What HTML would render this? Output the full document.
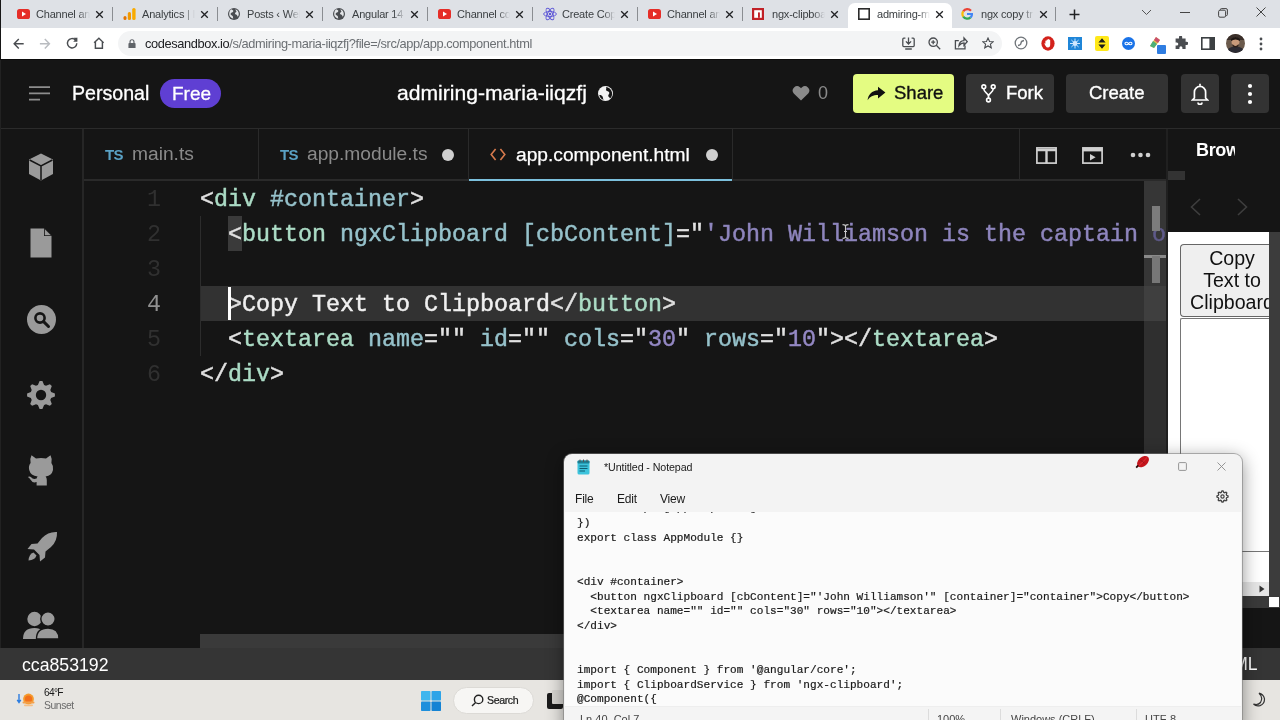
<!DOCTYPE html>
<html><head><meta charset="utf-8">
<style>
*{box-sizing:border-box;margin:0;padding:0}
html,body{width:1280px;height:720px;overflow:hidden;background:#151515;font-family:"Liberation Sans",sans-serif;}
.a{position:absolute}
#root{position:relative;width:1280px;height:720px;overflow:hidden;filter:blur(0.4px);will-change:transform}
/* chrome */
#tabs{left:0;top:0;width:1280px;height:28px;background:#dee1e6}
.tt{top:7px;font-size:11px;letter-spacing:-0.2px;color:#3c4043;white-space:nowrap;overflow:hidden;height:15px;line-height:15px}
.tx{top:6px;font-size:13px;color:#202124;line-height:15px;width:10px;text-align:center}
.sep{top:7px;width:1px;height:14px;background:#8a8d91}
#addr{left:0;top:28px;width:1280px;height:31px;background:#fff}
#pill{left:118px;top:31px;width:884px;height:25px;border-radius:13px;background:#f3f4f5}
/* csb */
#hdr{left:0;top:59px;width:1280px;height:70px;background:#151515;border-bottom:1px solid #2b2b2b}
.btn{top:74px;height:39px;border-radius:4px;background:#333;color:#fff;font-size:18.5px;line-height:39px;white-space:nowrap}
#side{left:0;top:129px;width:84px;height:519px;background:#151515;border-right:2px solid #262626}
#tabbar{left:84px;top:129px;width:1083px;height:52px;background:#151515;border-bottom:2px solid #2a2a2a}
.ft{top:129px;height:51px;border-right:1px solid #2a2a2a;font-size:18px;line-height:51px;white-space:nowrap}
.code{font-family:"Liberation Mono",monospace;font-size:23.33px;line-height:35px;white-space:pre;height:35px;margin-top:2px;-webkit-text-stroke:0.45px}
.ln{left:120px;width:41px;text-align:right;color:#303030;-webkit-text-stroke:0 !important}
.tg{color:#acdcc6}.at{color:#96c2cb}.pn{color:#e2e2e2}.st{color:#8e85bd}.wh{color:#f0f0f0}.nm{color:#9488c4}
.np{font-family:"Liberation Mono",monospace;font-size:11.1px;line-height:14.7px;white-space:pre;color:#1a1a1a;left:577px;margin-top:1.5px;-webkit-text-stroke:0.2px #1a1a1a}
</style></head><body><div id="root">
<!-- CHROME TABS -->
<div class="a" id="tabs"></div>
<div class="a" style="left:848px;top:3px;width:104px;height:26px;background:#fff;border-radius:7px 7px 0 0"></div>
<svg class="a" style="left:17px;top:9px" width="13" height="10" viewBox="0 0 13 10"><rect width="13" height="10" rx="2.6" fill="#e52d27"/><path d="M5 2.6 L9 5 L5 7.4Z" fill="#fff"/></svg>
<div class="a tt" style="left:36px;width:54px;-webkit-mask-image:linear-gradient(90deg,#000 78%,transparent 100%)">Channel an</div>
<svg class="a" style="left:95px;top:10px" width="9" height="9" viewBox="0 0 9 9"><path d="M1.2 1.2 L7.8 7.8 M7.8 1.2 L1.2 7.8" stroke="#202124" stroke-width="1.3"/></svg>
<div class="a sep" style="left:112px"></div>
<svg class="a" style="left:123px;top:8px" width="13" height="12" viewBox="0 0 13 12"><rect x="0.5" y="8" width="3" height="4" rx="1.5" fill="#e37400"/><rect x="4.8" y="4" width="3.2" height="8" rx="1.5" fill="#f29900"/><rect x="9.2" y="0" width="3.4" height="12" rx="1.6" fill="#f9ab00"/></svg>
<div class="a tt" style="left:142px;width:53px;-webkit-mask-image:linear-gradient(90deg,#000 78%,transparent 100%)">Analytics | I</div>
<svg class="a" style="left:200px;top:10px" width="9" height="9" viewBox="0 0 9 9"><path d="M1.2 1.2 L7.8 7.8 M7.8 1.2 L1.2 7.8" stroke="#202124" stroke-width="1.3"/></svg>
<div class="a sep" style="left:217px"></div>
<svg class="a" style="left:228px;top:8px" width="12" height="12" viewBox="0 0 12 12"><circle cx="6" cy="6" r="6" fill="#4a4d51"/><path d="M3.2 1.2 C4.5 2 5.8 2.2 5.2 3.6 C4.6 4.8 3 4.4 2.6 5.8 C2.3 7 3.8 7.4 4.6 8 C5.2 8.6 4.8 10 5.4 10.6 L4 10.2 C2 9 1 7.5 1.2 5.5 C1.3 3.5 2 2.2 3.2 1.2Z M7.5 1.2 C9.5 2 10.8 3.8 10.8 6 C10.8 7 10.4 8 9.8 8.8 C9.2 8.2 9.4 7.2 8.6 6.8 C7.8 6.4 6.8 6.2 7 5.2 C7.2 4.4 8.4 4.4 8.4 3.6 C8.4 2.8 7.4 2.4 7.5 1.2Z" fill="#e3e5e8"/></svg>
<div class="a tt" style="left:247px;width:53px;-webkit-mask-image:linear-gradient(90deg,#000 78%,transparent 100%)">Posts ‹ Wel</div>
<svg class="a" style="left:305px;top:10px" width="9" height="9" viewBox="0 0 9 9"><path d="M1.2 1.2 L7.8 7.8 M7.8 1.2 L1.2 7.8" stroke="#202124" stroke-width="1.3"/></svg>
<div class="a sep" style="left:322px"></div>
<svg class="a" style="left:333px;top:8px" width="12" height="12" viewBox="0 0 12 12"><circle cx="6" cy="6" r="6" fill="#4a4d51"/><path d="M3.2 1.2 C4.5 2 5.8 2.2 5.2 3.6 C4.6 4.8 3 4.4 2.6 5.8 C2.3 7 3.8 7.4 4.6 8 C5.2 8.6 4.8 10 5.4 10.6 L4 10.2 C2 9 1 7.5 1.2 5.5 C1.3 3.5 2 2.2 3.2 1.2Z M7.5 1.2 C9.5 2 10.8 3.8 10.8 6 C10.8 7 10.4 8 9.8 8.8 C9.2 8.2 9.4 7.2 8.6 6.8 C7.8 6.4 6.8 6.2 7 5.2 C7.2 4.4 8.4 4.4 8.4 3.6 C8.4 2.8 7.4 2.4 7.5 1.2Z" fill="#e3e5e8"/></svg>
<div class="a tt" style="left:352px;width:53px;-webkit-mask-image:linear-gradient(90deg,#000 78%,transparent 100%)">Angular 14</div>
<svg class="a" style="left:410px;top:10px" width="9" height="9" viewBox="0 0 9 9"><path d="M1.2 1.2 L7.8 7.8 M7.8 1.2 L1.2 7.8" stroke="#202124" stroke-width="1.3"/></svg>
<div class="a sep" style="left:427px"></div>
<svg class="a" style="left:438px;top:9px" width="13" height="10" viewBox="0 0 13 10"><rect width="13" height="10" rx="2.6" fill="#e52d27"/><path d="M5 2.6 L9 5 L5 7.4Z" fill="#fff"/></svg>
<div class="a tt" style="left:457px;width:53px;-webkit-mask-image:linear-gradient(90deg,#000 78%,transparent 100%)">Channel co</div>
<svg class="a" style="left:515px;top:10px" width="9" height="9" viewBox="0 0 9 9"><path d="M1.2 1.2 L7.8 7.8 M7.8 1.2 L1.2 7.8" stroke="#202124" stroke-width="1.3"/></svg>
<div class="a sep" style="left:532px"></div>
<svg class="a" style="left:543px;top:7px" width="14" height="14" viewBox="0 0 14 14" fill="none" stroke="#5b55d6" stroke-width="0.9"><ellipse cx="7" cy="7" rx="6.4" ry="2.5"/><ellipse cx="7" cy="7" rx="6.4" ry="2.5" transform="rotate(60 7 7)"/><ellipse cx="7" cy="7" rx="6.4" ry="2.5" transform="rotate(120 7 7)"/><circle cx="7" cy="7" r="1.2" fill="#5b55d6" stroke="none"/></svg>
<div class="a tt" style="left:562px;width:53px;-webkit-mask-image:linear-gradient(90deg,#000 78%,transparent 100%)">Create Cop</div>
<svg class="a" style="left:620px;top:10px" width="9" height="9" viewBox="0 0 9 9"><path d="M1.2 1.2 L7.8 7.8 M7.8 1.2 L1.2 7.8" stroke="#202124" stroke-width="1.3"/></svg>
<div class="a sep" style="left:637px"></div>
<svg class="a" style="left:648px;top:9px" width="13" height="10" viewBox="0 0 13 10"><rect width="13" height="10" rx="2.6" fill="#e52d27"/><path d="M5 2.6 L9 5 L5 7.4Z" fill="#fff"/></svg>
<div class="a tt" style="left:667px;width:53px;-webkit-mask-image:linear-gradient(90deg,#000 78%,transparent 100%)">Channel an</div>
<svg class="a" style="left:725px;top:10px" width="9" height="9" viewBox="0 0 9 9"><path d="M1.2 1.2 L7.8 7.8 M7.8 1.2 L1.2 7.8" stroke="#202124" stroke-width="1.3"/></svg>
<div class="a sep" style="left:742px"></div>
<svg class="a" style="left:752px;top:8px" width="12" height="12" viewBox="0 0 12 12"><rect width="12" height="12" fill="#c12127"/><rect x="2.2" y="2.2" width="7.6" height="7.6" fill="#fff"/><rect x="6" y="4.4" width="1.9" height="5.4" fill="#c12127"/></svg>
<div class="a tt" style="left:772px;width:53px;-webkit-mask-image:linear-gradient(90deg,#000 78%,transparent 100%)">ngx-clipboa</div>
<svg class="a" style="left:830px;top:10px" width="9" height="9" viewBox="0 0 9 9"><path d="M1.2 1.2 L7.8 7.8 M7.8 1.2 L1.2 7.8" stroke="#202124" stroke-width="1.3"/></svg>
<svg class="a" style="left:858px;top:8px" width="12" height="12" viewBox="0 0 12 12"><rect x="0.8" y="0.8" width="10.4" height="10.4" fill="#fff" stroke="#2b2b2b" stroke-width="1.6"/></svg>
<div class="a tt" style="left:877px;width:53px;-webkit-mask-image:linear-gradient(90deg,#000 78%,transparent 100%)">admiring-m</div>
<svg class="a" style="left:935px;top:10px" width="9" height="9" viewBox="0 0 9 9"><path d="M1.2 1.2 L7.8 7.8 M7.8 1.2 L1.2 7.8" stroke="#202124" stroke-width="1.3"/></svg>
<svg class="a" style="left:961px;top:8px" width="12" height="12" viewBox="0 0 12 12" fill="none" stroke-width="2.2"><path d="M10 2.8 A5 5 0 0 0 2.2 3.4" stroke="#ea4335"/><path d="M2.2 3.4 A5 5 0 0 0 2.2 8.6" stroke="#fbbc05"/><path d="M2.2 8.6 A5 5 0 0 0 9.6 9.4" stroke="#34a853"/><path d="M9.6 9.4 A5 5 0 0 0 11 6 L6 6" stroke="#4285f4"/></svg>
<div class="a tt" style="left:981px;width:53px;-webkit-mask-image:linear-gradient(90deg,#000 78%,transparent 100%)">ngx copy tr</div>
<svg class="a" style="left:1039px;top:10px" width="9" height="9" viewBox="0 0 9 9"><path d="M1.2 1.2 L7.8 7.8 M7.8 1.2 L1.2 7.8" stroke="#202124" stroke-width="1.3"/></svg>
<div class="a sep" style="left:1055px"></div>
<svg class="a" style="left:1069px;top:9px" width="11" height="11" viewBox="0 0 11 11"><path d="M5.5 0.5V10.5M0.5 5.5H10.5" stroke="#202124" stroke-width="1.5"/></svg>
<svg class="a" style="left:1141px;top:9px" width="11" height="7" viewBox="0 0 11 7"><path d="M1 1 L5.5 5.5 L10 1" fill="none" stroke="#555" stroke-width="1"/></svg>
<div class="a" style="left:1180px;top:11.5px;width:10px;height:1.1px;background:#444"></div>
<svg class="a" style="left:1218px;top:8px" width="10" height="10" viewBox="0 0 10 10" fill="none" stroke="#444" stroke-width="1"><rect x="0.6" y="2.2" width="7" height="7" rx="1.4"/><path d="M2.4 2V1.6Q2.4 0.6 3.4 0.6H8Q9.4 0.6 9.4 2V6.6Q9.4 7.6 8.4 7.6H7.8"/></svg>
<svg class="a" style="left:1256px;top:7px" width="10" height="10" viewBox="0 0 10 10"><path d="M0.5 0.5 L9.5 9.5 M9.5 0.5 L0.5 9.5" stroke="#444" stroke-width="1"/></svg>
<div class="a" id="addr"></div>
<div class="a" id="pill"></div>
<svg class="a" style="left:12.8px;top:37.6px" width="11.6" height="11.6" viewBox="0 0 13 13" fill="none" stroke="#4a4d51" stroke-width="1.6"><path d="M12 6.5H1.5M6.5 1.2 L1.3 6.5 L6.5 11.8"/></svg>
<svg class="a" style="left:39.4px;top:37.6px" width="11.6" height="11.6" viewBox="0 0 13 13" fill="none" stroke="#b9bcc0" stroke-width="1.6"><path d="M1 6.5H11.5M6.5 1.2 L11.7 6.5 L6.5 11.8"/></svg>
<svg class="a" style="left:65.8px;top:37px" width="12.6" height="12.6" viewBox="0 0 14 14" fill="none" stroke="#4a4d51" stroke-width="1.6"><path d="M12 7 A5.2 5.2 0 1 1 10.4 3.2"/><path d="M8.2 0.8 H12.4 V5" stroke-width="0" fill="#4a4d51"/><path d="M12.6 0.6 V5.2 H8 Z" fill="#4a4d51" stroke="none"/></svg>
<svg class="a" style="left:92.6px;top:37px" width="11.8" height="12.6" viewBox="0 0 13 14" fill="none" stroke="#4a4d51" stroke-width="1.6"><path d="M1.2 6.5 L6.5 1.5 L11.8 6.5 M2.6 5.6 V12.6 H10.4 V5.6"/></svg>
<svg class="a" style="left:127.6px;top:38.6px" width="8" height="9.8" viewBox="0 0 9 11"><rect x="0.5" y="4.4" width="8" height="6.4" rx="1" fill="#5f6368"/><path d="M2.3 4.6V3 A2.2 2.2 0 0 1 6.7 3V4.6" fill="none" stroke="#5f6368" stroke-width="1.3"/></svg>
<div class="a" id="url" style="left:145px;top:36px;font-size:12.8px;line-height:16px;color:#6b6f73;white-space:nowrap;letter-spacing:-0.385px"><span style="color:#202124">codesandbox.io</span>/s/admiring-maria-iiqzfj?file=/src/app/app.component.html</div>
<svg class="a" style="left:902px;top:37px" width="13" height="13" viewBox="0 0 13 13" fill="none" stroke="#4a4d51" stroke-width="1.3"><path d="M3.4 1.2H1.8Q0.8 1.2 0.8 2.2V8.6Q0.8 9.6 1.8 9.6H11.2Q12.2 9.6 12.2 8.6V2.2Q12.2 1.2 11.2 1.2H9.6M6.5 0.6V6.8M3.9 4.4L6.5 7L9.1 4.4M3.2 12H9.8"/></svg>
<svg class="a" style="left:928px;top:37px" width="13" height="13" viewBox="0 0 13 13" fill="none" stroke="#4a4d51" stroke-width="1.3"><circle cx="5.2" cy="5.2" r="4.2"/><path d="M8.3 8.3L12.2 12.2M3.2 5.2H7.2M5.2 3.2V7.2"/></svg>
<svg class="a" style="left:954px;top:36px" width="14" height="14" viewBox="0 0 14 14" fill="none" stroke="#4a4d51" stroke-width="1.3"><path d="M4.8 4.6H1.4V12.8H11V9.4M5 9.6Q5.4 4.8 10 4.6V2L13.2 5.6L10 9.2V6.8Q7 6.8 5 9.6Z"/></svg>
<svg class="a" style="left:982px;top:37px" width="12" height="12" viewBox="0 0 14 14" fill="none" stroke="#4a4d51" stroke-width="1.3"><path d="M7 1.2L8.8 5.2L13 5.6L9.8 8.4L10.8 12.6L7 10.4L3.2 12.6L4.2 8.4L1 5.6L5.2 5.2Z"/></svg>
<svg class="a" style="left:1014px;top:36px" width="14" height="14" viewBox="0 0 14 14" fill="none" stroke="#70757a" stroke-width="1.3"><circle cx="7" cy="7" r="5.8"/><path d="M4 9.5Q7 9 7 7T10 4.5"/></svg>
<svg class="a" style="left:1041px;top:36px" width="14" height="15" viewBox="0 0 14 15"><ellipse cx="7" cy="7.5" rx="6.6" ry="7.2" fill="#d3221b"/><path d="M4.4 8V5.2Q4.4 4.6 5 4.6T5.6 5.2V4Q5.6 3.4 6.2 3.4T6.8 4V3.6Q6.8 3 7.4 3T8 3.6V4.2Q8 3.6 8.6 3.6T9.2 4.2V8.6Q9.2 11.6 7 11.6Q5.4 11.6 4.6 10L3.4 7.8Q3.2 7.2 3.8 7.2T4.4 8Z" fill="#fff"/></svg>
<svg class="a" style="left:1068px;top:37px" width="14" height="13" viewBox="0 0 14 13"><rect width="14" height="13" fill="#1f86d8"/><circle cx="7" cy="6.5" r="2.4" fill="#cfe8ff"/><path d="M7 1.5V11.5M2 6.5H12M3.4 3L10.6 10M10.6 3L3.4 10" stroke="#cfe8ff" stroke-width="1"/></svg>
<svg class="a" style="left:1095px;top:36px" width="14" height="15" viewBox="0 0 14 15"><rect width="14" height="15" rx="2" fill="#ffe81a"/><path d="M7 2.2L10.6 6.6H3.4ZM7 12.8L3.4 8.4H10.6Z" fill="#1a1a1a"/></svg>
<svg class="a" style="left:1122px;top:37px" width="13" height="13" viewBox="0 0 13 13"><circle cx="6.5" cy="6.5" r="6.5" fill="#1a73e8"/><path d="M6.5 6.5C5.4 4.8 3 4.8 3 6.5S5.4 8.2 6.5 6.5S10 4.8 10 6.5S7.6 8.2 6.5 6.5Z" fill="none" stroke="#fff" stroke-width="1.1"/></svg>
<svg class="a" style="left:1148px;top:35px" width="19" height="19" viewBox="0 0 19 19"><path d="M2 11L8 2L12 5L6 13Z" fill="#e9b949"/><path d="M2 11L5 6L9 9L6 13Z" fill="#4caf7a"/><path d="M8 2L12 5L10 8L6 5Z" fill="#c94f6d"/><rect x="9" y="10" width="9" height="9" rx="1" fill="#2f7de1"/></svg>
<svg class="a" style="left:1174px;top:36px" width="14" height="14" viewBox="0 0 14 14"><path d="M5 1.2A1.6 1.6 0 0 1 8.2 1.2V2.4H11.6V5.8H12.8A1.6 1.6 0 0 1 12.8 9H11.6V13H8.4V11.8A1.5 1.5 0 0 0 5.4 11.8V13H1.6V9.4H2.8A1.5 1.5 0 0 0 2.8 6.4H1.6V2.4H5Z" fill="#4a4d51"/></svg>
<svg class="a" style="left:1201px;top:37px" width="14" height="13" viewBox="0 0 14 13"><rect x="0.8" y="0.8" width="12.4" height="11.4" fill="#fff" stroke="#3c4043" stroke-width="1.6"/><rect x="8.4" y="0.8" width="4.8" height="11.4" fill="#3c4043"/></svg>
<svg class="a" style="left:1226px;top:34px" width="19" height="19" viewBox="0 0 19 19"><defs><clipPath id="av"><circle cx="9.5" cy="9.5" r="9.5"/></clipPath></defs><g clip-path="url(#av)"><rect width="19" height="19" fill="#6b5a4c"/><rect y="0" width="19" height="6" fill="#3a2f2a"/><ellipse cx="9.5" cy="8" rx="4" ry="4.6" fill="#c79a7a"/><path d="M5 5Q9.5 1 14 5V7Q9.5 4 5 7Z" fill="#1e1714"/><path d="M0 19Q1 12.5 9.5 12.5T19 19Z" fill="#2b2b33"/><path d="M6.5 10Q9.5 14 12.5 10V12Q9.5 15 6.5 12Z" fill="#2a1e19"/></g></svg>
<svg class="a" style="left:1259px;top:37px" width="4" height="14" viewBox="0 0 4 14"><circle cx="2" cy="2" r="1.4" fill="#4a4d51"/><circle cx="2" cy="7" r="1.4" fill="#4a4d51"/><circle cx="2" cy="12" r="1.4" fill="#4a4d51"/></svg>

<!-- CSB HEADER -->
<div class="a" id="hdr"></div>
<svg class="a" style="left:29px;top:86px" width="22" height="15" viewBox="0 0 22 15"><path d="M0 1.2H21M0 7.4H21M0 13.6H11" stroke="#8d8d8d" stroke-width="1.7"/></svg>
<div class="a" id="personal" style="left:72px;top:81px;font-size:19.6px;line-height:24px;color:#fff;white-space:nowrap;-webkit-text-stroke:0.3px #fff">Personal</div>
<div class="a" style="left:160px;top:79px;width:61px;height:29px;border-radius:15px;background:#5f3fd3"></div>
<div class="a" id="free" style="left:172px;top:82px;font-size:19px;line-height:24px;color:#fff;white-space:nowrap;-webkit-text-stroke:0.3px #fff">Free</div>
<div class="a" id="title" style="left:397px;top:81px;font-size:21.1px;line-height:24px;color:#fff;white-space:nowrap;-webkit-text-stroke:0.3px #fff">admiring-maria-iiqzfj</div>
<svg class="a" style="left:598px;top:86px" width="15" height="15" viewBox="0 0 12 12"><circle cx="6" cy="6" r="6" fill="#f2f2f2"/><path d="M6.4 0.8C7.2 1.8 6 2.6 6.6 3.6C7.2 4.4 8.6 4 9 5.2C9.4 6.4 8 6.8 8.2 8C8.4 9 9.4 9.2 9.6 10C10.8 9 11.4 7.4 11.3 6C11.2 3.4 9.2 1 6.4 0.8Z" fill="#151515"/><path d="M1 7.4C2 7 3 7.6 3.6 8.4C4.2 9.2 3.8 10.2 4.6 11C2.8 10.6 1.4 9.2 1 7.4Z" fill="#151515"/></svg>
<svg class="a" style="left:792px;top:85px" width="18" height="16" viewBox="0 0 18 16"><path d="M9 15.5L1.8 8.4A4.4 4.4 0 0 1 8 2.2L9 3.2L10 2.2A4.4 4.4 0 0 1 16.2 8.4Z" fill="#8a8a8a"/></svg>
<div class="a" style="left:818px;top:82px;font-size:18px;line-height:22px;color:#8a8a8a">0</div>
<div class="a btn" style="left:853px;width:101px;background:#e4fc82;color:#111"></div>
<svg class="a" style="left:867px;top:86px" width="19" height="15" viewBox="0 0 19 15"><path d="M11 0.8L18.4 6.6L11 12.4V9C6 9 3 10.6 0.6 14.2C1.2 8.4 5 4.6 11 4.2Z" fill="#111"/></svg>
<div class="a" id="share" style="-webkit-text-stroke:0.35px #111;left:894px;top:82px;font-size:18.5px;line-height:22px;color:#111">Share</div>
<div class="a btn" style="left:966px;width:88px"></div>
<svg class="a" style="left:981px;top:84px" width="15" height="19" viewBox="0 0 15 19" fill="none" stroke="#fff" stroke-width="1.6"><circle cx="2.8" cy="2.8" r="1.9"/><circle cx="12.2" cy="2.8" r="1.9"/><circle cx="7.5" cy="16" r="1.9"/><path d="M2.8 4.8C2.8 9 7.5 8.6 7.5 12.4V14M12.2 4.8C12.2 9 7.5 8.6 7.5 12.4"/></svg>
<div class="a" id="fork" style="-webkit-text-stroke:0.35px #fff;left:1006px;top:82px;font-size:18.5px;line-height:22px;color:#fff">Fork</div>
<div class="a btn" style="left:1066px;width:102px"></div>
<div class="a" id="create" style="-webkit-text-stroke:0.35px #fff;left:1089px;top:82px;font-size:18.5px;line-height:22px;color:#fff">Create</div>
<div class="a btn" style="left:1181px;width:38px"></div>
<svg class="a" style="left:1191px;top:83px" width="18" height="22" viewBox="0 0 18 22" fill="none" stroke="#fff" stroke-width="1.7"><path d="M9 2.4V0.8M3.4 15V9A5.6 5.6 0 0 1 14.6 9V15L16.6 17H1.4ZM7 19.4A2 2 0 0 0 11 19.4"/></svg>
<div class="a btn" style="left:1231px;width:38px"></div>
<svg class="a" style="left:1247px;top:83px" width="6" height="22" viewBox="0 0 6 22"><circle cx="3" cy="3" r="2.1" fill="#fff"/><circle cx="3" cy="11" r="2.1" fill="#fff"/><circle cx="3" cy="19" r="2.1" fill="#fff"/></svg>
<div class="a" id="side"></div>
<div class="a" id="tabbar"></div>
<svg class="a" style="left:28px;top:153px" width="26" height="28" viewBox="0 0 26 28"><path d="M13 0.5L25 6.5V21L13 27.5L1 21V6.5Z" fill="#9a9a9a"/><path d="M1.6 7L13 13L24.4 7M13 13V27" stroke="#151515" stroke-width="1.5" fill="none"/></svg>
<svg class="a" style="left:30px;top:228px" width="22" height="30" viewBox="0 0 22 30"><path d="M0.5 0.5H14L21.5 8V29.5H0.5Z" fill="#9a9a9a"/><path d="M14 0.5V8H21.5" fill="#151515"/><path d="M14.8 1.2L20.8 7.2H14.8Z" fill="#9a9a9a"/></svg>
<svg class="a" style="left:27px;top:305px" width="29" height="29" viewBox="0 0 29 29"><circle cx="14.5" cy="14.5" r="14.5" fill="#9a9a9a"/><circle cx="13" cy="13" r="4.6" fill="none" stroke="#151515" stroke-width="2.6"/><path d="M16.6 16.6L21.5 21.5" stroke="#151515" stroke-width="3" stroke-linecap="round"/></svg>
<svg class="a" style="left:26px;top:380px" width="30" height="30" viewBox="0 0 30 30"><path d="M28.9 13.6 L28.9 16.4 L25.1 18.1 L24.3 20.0 L25.8 23.9 L23.9 25.8 L20.0 24.3 L18.1 25.1 L16.4 28.9 L13.6 28.9 L11.9 25.1 L10.0 24.3 L6.1 25.8 L4.2 23.9 L5.7 20.0 L4.9 18.1 L1.1 16.4 L1.1 13.6 L4.9 11.9 L5.7 10.0 L4.2 6.1 L6.1 4.2 L10.0 5.7 L11.9 4.9 L13.6 1.1 L16.4 1.1 L18.1 4.9 L20.0 5.7 L23.9 4.2 L25.8 6.1 L24.3 10.0 L25.1 11.9Z" fill="#9a9a9a"/><circle cx="15" cy="15" r="5.2" fill="#151515"/></svg>
<svg class="a" style="left:27px;top:454px" width="28" height="32" viewBox="0 0 28 32"><path d="M4.5 1.2L9 4.6Q14 3.4 19 4.6L23.5 1.2Q25.6 5.4 24.4 9Q26.8 12 26 16Q24.8 21.6 18.6 22.6Q19.8 24 19.8 26V31.5H9.6V28Q5.4 29.4 3.4 25.6Q2.4 23.6 0.8 23Q2.8 22 4.4 23.6Q5.8 25.6 9.6 24.6Q9.8 23.4 10.6 22.6Q3.6 21.6 2.2 16Q1.2 12 3.6 9Q2.4 5.4 4.5 1.2Z" fill="#9a9a9a"/></svg>
<svg class="a" style="left:26px;top:531px" width="32" height="32" viewBox="0 0 32 32"><path d="M31 1Q22 0.5 16 7L11.5 12.5L5.5 13L1.5 18L8 18.5L13.5 24L14 30.5L19 26.5L19.5 20.5L25 16Q31.5 10 31 1Z" fill="#9a9a9a"/><path d="M7.5 21.5Q3 23 2.5 29.5Q9 29 10.5 24.5Z" fill="#9a9a9a"/></svg>
<svg class="a" style="left:23px;top:611px" width="36" height="28" viewBox="0 0 36 28"><circle cx="11.5" cy="8" r="7.2" fill="#9a9a9a"/><path d="M0 28Q0 17 11.5 17Q17 17 19 20V28Z" fill="#9a9a9a"/><circle cx="25" cy="8" r="7.2" fill="#9a9a9a" stroke="#151515" stroke-width="1.4"/><path d="M13.5 28Q13.5 17 25 17Q36 17 36 28Z" fill="#9a9a9a" stroke="#151515" stroke-width="1.4"/></svg>
<div class="a" style="left:258px;top:129px;width:1px;height:51px;background:#2a2a2a"></div>
<div class="a" style="left:468px;top:129px;width:1px;height:51px;background:#2a2a2a"></div>
<div class="a" style="left:732px;top:129px;width:1px;height:51px;background:#2a2a2a"></div>
<div class="a" style="left:1019px;top:129px;width:1px;height:51px;background:#2a2a2a"></div>
<div class="a" style="left:469px;top:179px;width:263px;height:2px;background:#7cc0dc"></div>
<div class="a" style="left:105px;top:145px;font-size:15px;font-weight:bold;color:#5aa1c4;line-height:20px;letter-spacing:-0.7px">TS</div>
<div class="a" id="t1" style="left:132px;top:143px;font-size:19.2px;line-height:22px;color:#8a8a8a;white-space:nowrap">main.ts</div>
<div class="a" style="left:280px;top:145px;font-size:15px;font-weight:bold;color:#5aa1c4;line-height:20px;letter-spacing:-0.7px">TS</div>
<div class="a" id="t2" style="left:307px;top:143px;font-size:19.2px;line-height:22px;color:#8a8a8a;white-space:nowrap">app.module.ts</div>
<div class="a" style="left:442px;top:149px;width:12px;height:12px;border-radius:6px;background:#cfcfcf"></div>
<svg class="a" style="left:490px;top:148px" width="16" height="13" viewBox="0 0 16 13" fill="none" stroke="#d77a4d" stroke-width="1.6"><path d="M5.6 1L1.2 6.5L5.6 12M10.4 1L14.8 6.5L10.4 12"/></svg>
<div class="a" id="t3" style="left:516px;top:143.5px;font-size:19.2px;line-height:22px;color:#fff;white-space:nowrap;-webkit-text-stroke:0.25px #fff">app.component.html</div>
<div class="a" style="left:706px;top:149px;width:12px;height:12px;border-radius:6px;background:#cfcfcf"></div>
<svg class="a" style="left:1036px;top:147px" width="21" height="17" viewBox="0 0 21 17" fill="none" stroke="#d0d0d0" stroke-width="1.7"><rect x="0.9" y="0.9" width="19.2" height="15.2"/><path d="M1 3H20M10.5 3V16" stroke-width="2.4"/></svg>
<svg class="a" style="left:1082px;top:147px" width="21" height="17" viewBox="0 0 21 17"><rect x="0.9" y="0.9" width="19.2" height="15.2" fill="none" stroke="#d0d0d0" stroke-width="1.7"/><rect x="1" y="1" width="19" height="3.4" fill="#d0d0d0"/><path d="M8 7L13.6 10.2L8 13.4Z" fill="#d0d0d0"/></svg>
<svg class="a" style="left:1130px;top:152px" width="21" height="6" viewBox="0 0 21 6"><circle cx="3" cy="3" r="2.3" fill="#d0d0d0"/><circle cx="10.5" cy="3" r="2.3" fill="#d0d0d0"/><circle cx="18" cy="3" r="2.3" fill="#d0d0d0"/></svg>
<div class="a" style="left:200px;top:286px;width:967px;height:35px;background:#323232"></div>
<div class="a" style="left:228px;top:216px;width:14px;height:35px;background:#3a3a3a"></div>
<div class="a" style="left:200px;top:216px;width:1px;height:140px;background:#2c2c2c"></div>
<div class="a code ln" style="top:181px">1</div>
<div class="a code ln" style="top:216px">2</div>
<div class="a code ln" style="top:251px">3</div>
<div class="a code ln" style="top:286px;color:#909090">4</div>
<div class="a code ln" style="top:321px">5</div>
<div class="a code ln" style="top:356px">6</div>
<div class="a code" id="c1" style="left:200px;top:181px"><span class="pn">&lt;</span><span class="tg">div</span> <span class="at">#container</span><span class="pn">&gt;</span></div>
<div class="a code" id="c2" style="left:228px;top:216px"><span class="pn">&lt;</span><span class="tg">button</span> <span class="at">ngxClipboard</span> <span class="at">[cbContent]</span><span class="pn">=&quot;</span><span class="st">'John Williamson is the captain </span></div>
<div class="a code" id="c4" style="left:228px;top:286px"><span class="pn">&gt;</span><span class="wh">Copy Text to Clipboard</span><span class="pn">&lt;/</span><span class="tg">button</span><span class="pn">&gt;</span></div>
<div class="a code" id="c5" style="left:228px;top:321px"><span class="pn">&lt;</span><span class="tg">textarea</span> <span class="at">name</span><span class="pn">=&quot;&quot;</span> <span class="at">id</span><span class="pn">=&quot;&quot;</span> <span class="at">cols</span><span class="pn">=&quot;</span><span class="nm">30</span><span class="pn">&quot;</span> <span class="at">rows</span><span class="pn">=&quot;</span><span class="nm">10</span><span class="pn">&quot;&gt;&lt;/</span><span class="tg">textarea</span><span class="pn">&gt;</span></div>
<div class="a code" id="c6" style="left:200px;top:356px"><span class="pn">&lt;/</span><span class="tg">div</span><span class="pn">&gt;</span></div>
<div class="a" style="left:228px;top:287px;width:3px;height:33px;background:#fff"></div>
<div class="a" style="left:1144px;top:181px;width:23px;height:140px;background:#363636"></div>
<div class="a" style="left:1144px;top:321px;width:23px;height:327px;background:#2f2f2f"></div>
<div class="a" style="left:1144px;top:286px;width:23px;height:35px;background:#3f3f3f"></div>
<div class="a code" style="left:1152px;top:216px;color:#5f5a8a">o</div>
<div class="a" style="left:1152px;top:206px;width:8px;height:25px;background:#7c7c7c"></div>
<div class="a" style="left:1144px;top:255px;width:23px;height:3px;background:#8a8a8a"></div>
<div class="a" style="left:1152px;top:256px;width:8px;height:27px;background:#777"></div>
<svg class="a" style="left:842px;top:224px" width="7" height="15" viewBox="0 0 7 15" fill="none" stroke="#c8c8c8" stroke-width="1.1"><path d="M0.5 0.6Q3.5 0.6 3.5 2.5V12.5Q3.5 14.4 0.5 14.4M6.5 0.6Q3.5 0.6 3.5 2.5M3.5 12.5Q3.5 14.4 6.5 14.4M2 7.5H5"/></svg>
<div class="a" style="left:200px;top:634px;width:967px;height:14px;background:#3a3a3a"></div>
<div class="a" style="left:1166px;top:129px;width:2px;height:519px;background:#202020"></div>
<div class="a" style="left:1168px;top:129px;width:112px;height:519px;background:#151515"></div>
<div class="a" id="brow" style="left:1196px;top:138.5px;width:38.5px;overflow:hidden;white-space:nowrap;font-size:18px;font-weight:bold;line-height:22px;color:#fff;letter-spacing:-0.35px">Browser</div>
<div class="a" style="left:1168px;top:171px;width:17px;height:9px;background:#333"></div>
<svg class="a" style="left:1190px;top:198px" width="11" height="18" viewBox="0 0 11 18" fill="none" stroke="#3e3e3e" stroke-width="1.6"><path d="M10 1L1.5 9L10 17"/></svg>
<svg class="a" style="left:1237px;top:198px" width="11" height="18" viewBox="0 0 11 18" fill="none" stroke="#3e3e3e" stroke-width="1.6"><path d="M1 1L9.5 9L1 17"/></svg>
<div class="a" style="left:1168px;top:232px;width:101px;height:364px;background:#fff"></div>
<div class="a" style="left:1269px;top:232px;width:11px;height:364px;background:#3c3c3c"></div>
<div class="a" style="left:1180px;top:244px;width:100px;height:73px;background:#efefef;border:1.5px solid #666;border-right:none;border-radius:4px 0 0 4px"></div>
<div class="a" style="left:1269px;top:232px;width:11px;height:364px;background:#3c3c3c"></div>
<div class="a" id="pb" style="left:1182px;top:247px;width:100px;font-size:19.6px;line-height:22px;color:#111;text-align:center;white-space:nowrap;overflow:hidden;height:68px">Copy<br>Text to<br>Clipboard</div>
<div class="a" style="left:1269px;top:232px;width:11px;height:364px;background:#3c3c3c"></div>
<div class="a" style="left:1180px;top:318px;width:100px;height:234px;background:#fff;border:1.5px solid #767676;border-right:none;border-radius:2px 0 0 2px"></div>
<div class="a" style="left:1269px;top:232px;width:11px;height:364px;background:#3c3c3c"></div>
<div class="a" style="left:1168px;top:582px;width:101px;height:14px;background:#e6e6e6"></div>
<svg class="a" style="left:1259px;top:585px" width="6" height="8" viewBox="0 0 6 8"><path d="M0.5 0.5L5.5 4L0.5 7.5Z" fill="#333"/></svg>
<div class="a" style="left:1168px;top:596px;width:112px;height:12px;background:#3a3a3a"></div>
<div class="a" style="left:1269px;top:597px;width:10px;height:10px;background:#fff"></div>
<div class="a" style="left:0;top:648px;width:1280px;height:32px;background:#353535"></div>
<div class="a" id="cca" style="left:22px;top:652.7px;font-size:17.7px;line-height:24px;color:#fff;letter-spacing:0px">cca853192</div>
<div class="a" id="ml" style="left:1200px;width:57.5px;text-align:right;top:652px;font-size:17.5px;line-height:24px;color:#fff;white-space:nowrap">HTML</div>
<div class="a" style="left:0;top:680px;width:1280px;height:40px;background:#e7e5e1"></div>
<svg class="a" style="left:16px;top:692px" width="20" height="16" viewBox="0 0 20 16"><path d="M3 2V10M1.2 7.8L3 10.4L4.8 7.8" stroke="#2d7de0" stroke-width="1.4" fill="none"/><circle cx="12.5" cy="7" r="5.4" fill="#f59a2c"/><circle cx="12.5" cy="7" r="3.6" fill="#f2701c"/><rect x="6.5" y="9.6" width="12" height="2" rx="1" fill="#f4a049"/><rect x="8" y="12.4" width="9" height="1.8" rx="0.9" fill="#f6bf85"/></svg>
<div class="a" style="left:44px;top:686px;font-size:10.2px;line-height:14px;color:#1a1a1a;letter-spacing:-0.7px">64°F</div>
<div class="a" style="left:44px;top:699px;font-size:10.4px;line-height:14px;color:#6a6a6a;letter-spacing:-0.45px">Sunset</div>
<svg class="a" style="left:421px;top:690.5px" width="20" height="20" viewBox="0 0 20 20"><rect x="0" y="0" width="9.5" height="9.5" rx="0.8" fill="#3fb6ee"/><rect x="10.5" y="0" width="9.5" height="9.5" rx="0.8" fill="#2da4e8"/><rect x="0" y="10.5" width="9.5" height="9.5" rx="0.8" fill="#1d8fdc"/><rect x="10.5" y="10.5" width="9.5" height="9.5" rx="0.8" fill="#1483d4"/></svg>
<div class="a" style="left:453px;top:687px;width:81px;height:27px;border-radius:14px;background:#f7f6f4;border:1px solid #dcdad6"></div>
<svg class="a" style="left:471px;top:694px" width="13" height="13" viewBox="0 0 13 13" fill="none" stroke="#222" stroke-width="1.4"><circle cx="7.6" cy="5.4" r="4.2"/><path d="M4.6 8.4L1 12"/></svg>
<div class="a" style="left:487px;top:693px;font-size:10.6px;line-height:14px;color:#1a1a1a;letter-spacing:-0.4px;-webkit-text-stroke:0.2px #1a1a1a">Search</div>
<div class="a" style="left:547px;top:693px;width:16px;height:16px;background:#1b1b1b;border-radius:2px"></div>
<div class="a" style="left:552px;top:690px;width:12px;height:14px;background:#d8d6d2;border-radius:1px"></div>
<svg class="a" style="left:1252px;top:692px" width="14" height="15" viewBox="0 0 14 15" fill="none" stroke="#333" stroke-width="1.2"><path d="M7 1.2Q11.5 5 8.5 10.5Q6 13.5 1.5 12Q4 14.6 8 13.6Q13 11.6 12.4 6.4Q11.4 2.4 7 1.2Z"/></svg>

<div class="a" style="left:564px;top:454px;width:678px;height:280px;background:#f3f3f3;border-radius:8px;box-shadow:0 0 0 1px rgba(120,120,120,0.55),0 4px 18px rgba(0,0,0,0.45)"></div>
<div class="a" style="left:565px;top:512px;width:676px;height:194px;background:#fbfbfb"></div>
<svg class="a" style="left:577px;top:459px" width="13" height="16" viewBox="0 0 13 16"><rect x="0.5" y="1.5" width="12" height="14" rx="1.5" fill="#3cc3dc"/><rect x="0.5" y="1.5" width="12" height="3" rx="1" fill="#1c7f94"/><path d="M2.5 7H10.5M2.5 9.5H10.5M2.5 12H8" stroke="#0f5d70" stroke-width="1"/><path d="M3 0.5V3M6.5 0.5V3M10 0.5V3" stroke="#555" stroke-width="1"/></svg>
<div class="a" id="nt" style="left:604px;top:460px;font-size:10.7px;line-height:14px;color:#1a1a1a;white-space:nowrap;letter-spacing:-0.1px">*Untitled - Notepad</div>
<svg class="a" style="left:1134px;top:454px" width="17" height="16" viewBox="0 0 17 16"><ellipse cx="9" cy="7.6" rx="6.8" ry="4.6" transform="rotate(-42 9 7.6)" fill="#c4141b"/><path d="M4.2 11.4L2.2 13.6" stroke="#2a0808" stroke-width="1.8"/><path d="M5 11.5Q9 8 13 3.4" stroke="#e0383c" stroke-width="0.9" fill="none"/><path d="M6.4 6.4Q9 6.8 10.4 9.6" stroke="#8e0d12" stroke-width="0.7" fill="none"/></svg>
<svg class="a" style="left:1178px;top:462px" width="9" height="9" viewBox="0 0 9 9"><rect x="0.6" y="0.6" width="7.8" height="7.8" rx="1" fill="none" stroke="#8a8a8a" stroke-width="0.9"/></svg>
<svg class="a" style="left:1217px;top:462px" width="9" height="9" viewBox="0 0 9 9"><path d="M0.5 0.5L8.5 8.5M8.5 0.5L0.5 8.5" stroke="#8a8a8a" stroke-width="0.9"/></svg>
<div class="a" style="left:575px;top:490.5px;font-size:12px;line-height:16px;color:#1a1a1a;white-space:nowrap;letter-spacing:-0.2px">File</div>
<div class="a" style="left:617px;top:490.5px;font-size:12px;line-height:16px;color:#1a1a1a;white-space:nowrap;letter-spacing:-0.2px">Edit</div>
<div class="a" style="left:660px;top:490.5px;font-size:12px;line-height:16px;color:#1a1a1a;white-space:nowrap;letter-spacing:-0.2px">View</div>
<svg class="a" style="left:1216px;top:490px" width="13" height="13" viewBox="0 0 13 13" fill="none" stroke="#444" stroke-width="1.25"><path d="M12.07 5.95 L12.07 7.05 L10.61 7.75 L10.29 8.53 L10.83 10.05 L10.05 10.83 L8.53 10.29 L7.75 10.61 L7.05 12.07 L5.95 12.07 L5.25 10.61 L4.47 10.29 L2.95 10.83 L2.17 10.05 L2.71 8.53 L2.39 7.75 L0.93 7.05 L0.93 5.95 L2.39 5.25 L2.71 4.47 L2.17 2.95 L2.95 2.17 L4.47 2.71 L5.25 2.39 L5.95 0.93 L7.05 0.93 L7.75 2.39 L8.53 2.71 L10.05 2.17 L10.83 2.95 L10.29 4.47 L10.61 5.25Z"/><circle cx="6.5" cy="6.5" r="1.6"/></svg>
<div class="a" style="left:565px;top:512px;width:676px;height:194px;overflow:hidden">
<div class="a np" style="left:12px;top:-12.6px;color:#333">  bootstrap: [AppComponent]</div>
<div class="a np" style="left:12px;top:2px">})</div>
<div class="a np" style="left:12px;top:17px">export class AppModule {}</div>
<div class="a np" style="left:12px;top:61px">&lt;div #container&gt;</div>
<div class="a np" style="left:12px;top:76px">  &lt;button ngxClipboard [cbContent]=&quot;'John Williamson'&quot; [container]=&quot;container&quot;&gt;Copy&lt;/button&gt;</div>
<div class="a np" style="left:12px;top:90.5px">  &lt;textarea name=&quot;&quot; id=&quot;&quot; cols=&quot;30&quot; rows=&quot;10&quot;&gt;&lt;/textarea&gt;</div>
<div class="a np" style="left:12px;top:105px">&lt;/div&gt;</div>
<div class="a np" style="left:12px;top:149px">import { Component } from '@angular/core';</div>
<div class="a np" style="left:12px;top:164px">import { ClipboardService } from 'ngx-clipboard';</div>
<div class="a np" style="left:12px;top:178.5px">@Component({</div>
</div>
<div class="a" style="left:565px;top:706px;width:676px;height:14px;background:#f4f4f4;border-top:1px solid #eeeeee"></div>
<div class="a" style="left:580px;font-size:11px;line-height:14px;color:#444;white-space:nowrap;top:712px">Ln 40, Col 7</div>
<div class="a" style="left:937px;font-size:11px;line-height:14px;color:#444;white-space:nowrap;top:712px">100%</div>
<div class="a" style="left:1011px;font-size:11px;line-height:14px;color:#444;white-space:nowrap;top:712px">Windows (CRLF)</div>
<div class="a" style="left:1145px;font-size:11px;line-height:14px;color:#444;white-space:nowrap;top:712px">UTF-8</div>
<div class="a" style="left:928px;top:709px;width:1px;height:11px;background:#dcdcdc"></div>
<div class="a" style="left:1000px;top:709px;width:1px;height:11px;background:#dcdcdc"></div>
<div class="a" style="left:1136px;top:709px;width:1px;height:11px;background:#dcdcdc"></div>



<div class="a" style="left:0;top:0;width:1px;height:60px;background:#161616"></div>
<div class="a" style="left:0;top:59px;width:1280px;height:1px;background:#0c0c0c"></div>
<div class="a" style="left:0;top:60px;width:1px;height:588px;background:#222"></div>
</div></body></html>
